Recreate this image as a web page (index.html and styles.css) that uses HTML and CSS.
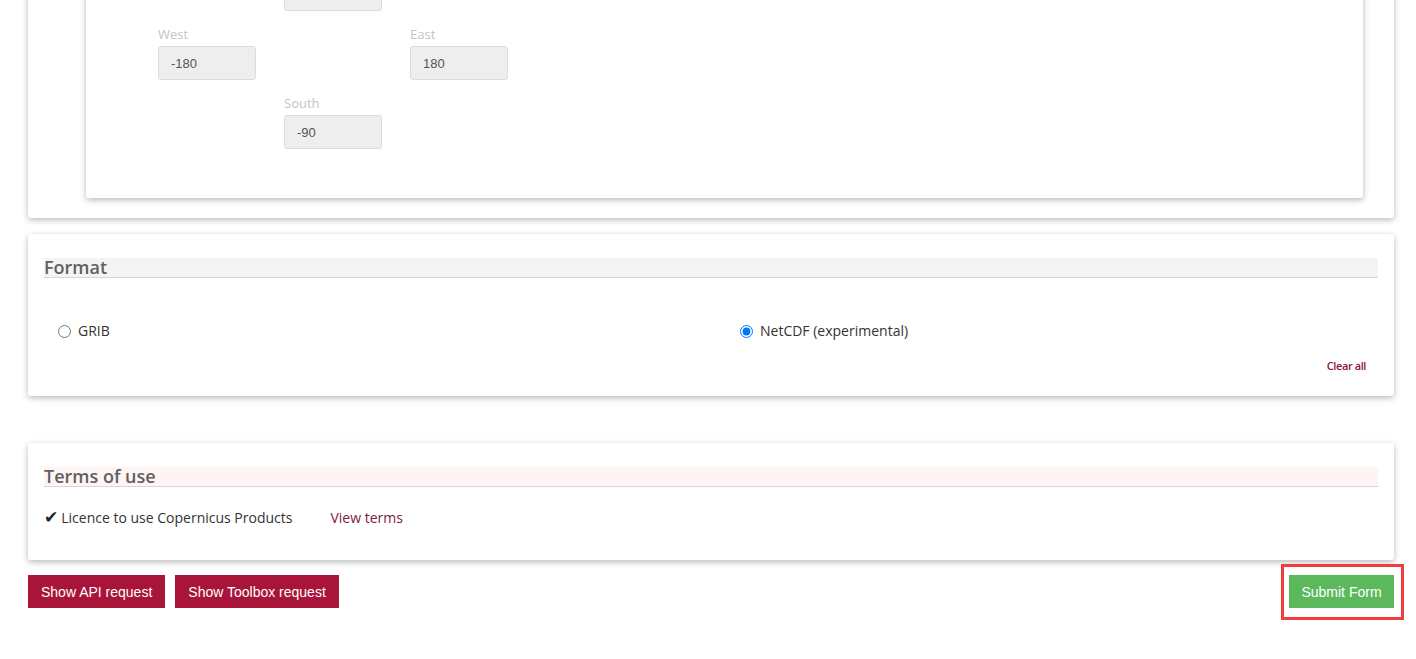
FILE: index.html
```html
<!DOCTYPE html>
<html>
<head>
<meta charset="utf-8">
<link rel="stylesheet" href="styles.css">
</head>
<body>
<div class="page">
  <section class="card card-area">
    <div class="inner-card">
      <div class="coord-row">
        <div class="field col-2">
          <label class="field-label">North</label>
          <input class="field-input" value="90" disabled>
        </div>
      </div>
      <div class="coord-row">
        <div class="field col-1">
          <label class="field-label">West</label>
          <input class="field-input" value="-180" disabled>
        </div>
        <div class="field col-3">
          <label class="field-label">East</label>
          <input class="field-input" value="180" disabled>
        </div>
      </div>
      <div class="coord-row">
        <div class="field col-2">
          <label class="field-label">South</label>
          <input class="field-input" value="-90" disabled>
        </div>
      </div>
    </div>
  </section>

  <section class="card card-format">
    <h2 class="card-title">Format</h2>
    <div class="radio-grid">
      <label class="radio-item"><input type="radio" name="fmt"> GRIB</label>
      <label class="radio-item"><input type="radio" name="fmt" checked> NetCDF (experimental)</label>
    </div>
    <div class="clear-row"><a class="clear-link">Clear all</a></div>
  </section>

  <section class="card card-terms">
    <h2 class="card-title title-pink">Terms of use</h2>
    <div class="terms-row">
      <span class="terms-item"><span class="check">&#10004;</span>Licence to use Copernicus Products</span>
      <a class="terms-link">View terms</a>
    </div>
  </section>

  <div class="actions">
    <div class="actions-left">
      <button class="btn btn-red">Show API request</button>
      <button class="btn btn-red">Show Toolbox request</button>
    </div>
    <span class="highlight"><button class="btn btn-green">Submit Form</button></span>
  </div>
</div>
</body>
</html>
```

FILE: styles.css
```css
html, body {
  margin: 0;
  padding: 0;
  background: #fff;
  font-family: "Open Sans", "Liberation Sans", sans-serif;
  color: #333;
}

.page {
  width: 1366px;
  margin-left: 28px;
  margin-top: -84px;
  padding-bottom: 50px;
}

.card {
  background: #fff;
  border-radius: 3px;
  box-shadow: 0 2px 6px rgba(0, 0, 0, 0.28);
}

.card-area {
  padding: 20px 31px 20px 58px;
}

.inner-card {
  background: #fff;
  border-radius: 3px;
  box-shadow: 0 2px 6px rgba(0, 0, 0, 0.28);
  padding: 20px 0 49px 72px;
  display: flex;
  flex-direction: column;
  gap: 14px;
}

.coord-row {
  display: grid;
  grid-template-columns: 126px 126px 126px;
}

.field {
  display: flex;
  flex-direction: column;
  gap: 3px;
}

.col-1 { grid-column: 1; }
.col-2 { grid-column: 2; }
.col-3 { grid-column: 3; }

.field-label {
  font-size: 13px;
  line-height: 18px;
  color: #c4c4c4;
}

.field-input {
  width: 98px;
  height: 34px;
  box-sizing: border-box;
  border: 1px solid #dcdcdc;
  border-radius: 3px;
  background: #eee;
  padding: 0 12px;
  font-family: "Liberation Sans", Arial, sans-serif;
  font-size: 13px;
  color: #555;
  margin: 0;
}

.card-format {
  margin-top: 16px;
  padding: 24px 16px 22px 16px;
}

.card-title {
  margin: 0;
  font-size: 18px;
  font-weight: 600;
  line-height: 19px;
  color: #606060;
  background: #f4f4f4;
  border-bottom: 1px solid #d6d6d6;
}

.title-pink {
  background: #fff4f4;
}

.radio-grid {
  display: grid;
  grid-template-columns: 682px 1fr;
  padding: 43px 0 0 14px;
}

.radio-item {
  display: flex;
  align-items: center;
  gap: 7px;
  font-size: 14px;
  line-height: 20px;
  color: #333;
}

.radio-item input {
  margin: 0;
  width: 13px;
  height: 13px;
}

.clear-row {
  display: flex;
  justify-content: flex-end;
  padding: 17px 12px 0 0;
}

.clear-link {
  font-size: 11px;
  font-weight: 600;
  line-height: 16px;
  color: #8a1538;
  letter-spacing: -0.4px;
}

.card-terms {
  margin-top: 47px;
  padding: 24px 16px 31px 16px;
}

.terms-row {
  display: flex;
  align-items: center;
  height: 22px;
  margin-top: 20px;
  font-size: 14px;
  line-height: 22px;
}

.terms-item {
  color: #333;
}

.check {
  color: #222;
  margin-right: 3px;
  font-family: "DejaVu Sans", sans-serif;
  font-size: 17px;
  line-height: 14px;
}

.terms-link {
  margin-left: 38px;
  color: #7b1c3a;
}

.actions {
  margin-top: 15px;
  display: flex;
  justify-content: space-between;
  align-items: flex-start;
}

.actions-left {
  display: flex;
  gap: 10px;
}

.btn {
  height: 33px;
  border: none;
  border-radius: 0;
  padding: 0 13px;
  font-family: "Liberation Sans", Arial, sans-serif;
  font-size: 14px;
  color: #fff;
  margin: 0;
}

.btn-red {
  background: #a8143a;
}

.btn-green {
  background: #5cb85c;
  width: 105px;
  padding: 0;
}

.highlight {
  display: inline-block;
  border: 3px solid #f33b3b;
  padding: 8px 7px 9px 5px;
  margin: -11px -10px 0 0;
}
```
